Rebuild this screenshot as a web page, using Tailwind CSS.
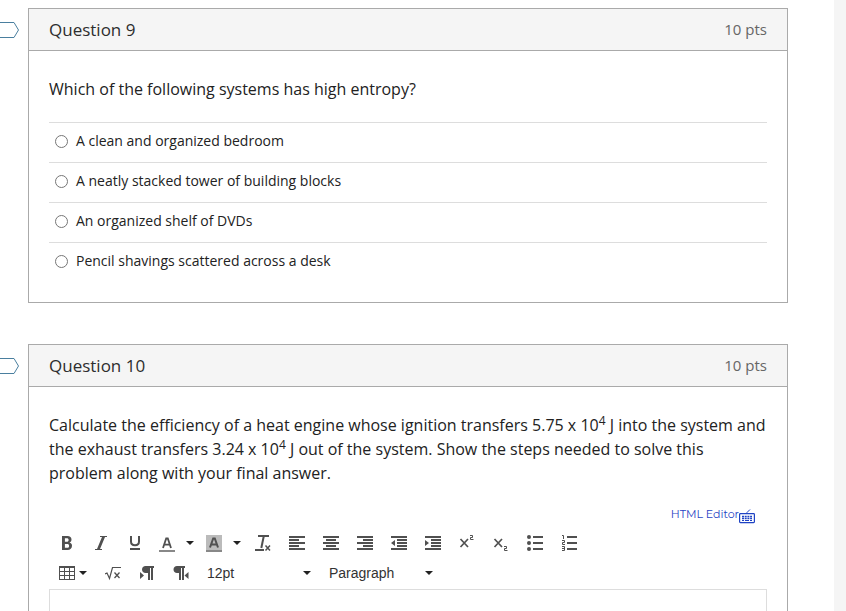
<!DOCTYPE html>
<html lang="en">
<head>
<meta charset="utf-8">
<meta name="viewport" content="width=device-width, initial-scale=1">
<title>Quiz</title>
<script src="https://cdn.jsdelivr.net/npm/@tailwindcss/browser@4"></script>
</head>
<body class="h-screen overflow-hidden bg-[#f5f5f5] pr-3 font-['Open_Sans',sans-serif] text-base text-[#222]">
<main class="flex min-h-full flex-col gap-[41px] bg-white pt-2 pr-[46px]">

  <section class="flex" aria-labelledby="q9">
    <button type="button" aria-label="Flag question 9" class="mt-[13px] h-[17px] w-7 shrink-0">
      <svg width="20" height="17" viewBox="0 0 20 17" fill="none" stroke="#4a7f9f"><path d="M-2 1.500H14L18.500 9L14 16.500H-2"/></svg>
    </button>
    <div class="min-w-0 grow border border-[#aaa]">
      <header class="flex h-[42px] items-center justify-between border-b border-[#aaa] bg-[#f5f5f5] px-5">
        <h2 id="q9" class="text-[17px] leading-6 text-[#2d2d2d]">Question 9</h2>
        <span class="pb-0.5 text-[15px] leading-6 text-[#666]">10 pts</span>
      </header>
      <div class="px-5 pt-[26px] pb-5">
        <p class="leading-6">Which of the following systems has high entropy?</p>
        <fieldset aria-label="Answers" class="mt-[21px] text-sm">
          <label class="flex h-10 items-center border-t border-[#ddd] pb-1 pl-1.5"><input type="radio" name="q9" class="mt-px mr-2 size-[13px]">A clean and organized bedroom</label>
          <label class="flex h-10 items-center border-t border-[#ddd] pb-1 pl-1.5"><input type="radio" name="q9" class="mt-px mr-2 size-[13px]">A neatly stacked tower of building blocks</label>
          <label class="flex h-10 items-center border-t border-[#ddd] pb-1 pl-1.5"><input type="radio" name="q9" class="mt-px mr-2 size-[13px]">An organized shelf of DVDs</label>
          <label class="flex h-10 items-center border-t border-[#ddd] pb-1 pl-1.5"><input type="radio" name="q9" class="mt-px mr-2 size-[13px]">Pencil shavings scattered across a desk</label>
        </fieldset>
      </div>
    </div>
  </section>

  <section class="flex" aria-labelledby="q10">
    <button type="button" aria-label="Flag question 10" class="mt-[13px] h-[17px] w-7 shrink-0">
      <svg width="20" height="17" viewBox="0 0 20 17" fill="none" stroke="#4a7f9f"><path d="M-2 1.500H14L18.500 9L14 16.500H-2"/></svg>
    </button>
    <div class="min-w-0 grow border border-[#aaa]">
      <header class="flex h-[42px] items-center justify-between border-b border-[#aaa] bg-[#f5f5f5] px-5">
        <h2 id="q10" class="text-[17px] leading-6 text-[#2d2d2d]">Question 10</h2>
        <span class="pb-0.5 text-[15px] leading-6 text-[#666]">10 pts</span>
      </header>
      <div class="px-5 pt-[26px] pb-5">
        <p class="leading-6">Calculate the efficiency of a heat engine whose ignition transfers 5.75 x 10<sup class="text-xs">4</sup> J into the system and the exhaust transfers 3.24 x 10<sup class="text-xs">4</sup> J out of the system. Show the steps needed to solve this problem along with your final answer.</p>
        <div class="mt-5 flex h-5 justify-end pr-3 text-[#1f43c4]">
          <a href="#" class="font-[Montserrat,Inter,sans-serif] text-[11px] leading-[18px]">HTML Editor</a>
          <button type="button" aria-label="Keyboard shortcuts" class="mt-1 h-[15px] w-4">
            <svg width="16" height="15" viewBox="0 0 16 15" fill="none" stroke="currentColor"><rect x=".6" y="4.600" width="14.800" height="9" rx=".8" stroke-width="1.200"/><path d="M8 4.500V3.500L11 .5"/><path d="M3 7.500h10M3 9.500h10" stroke-width="1.500" stroke-dasharray="2 .7"/><path d="M3 11.500h2M6 11.500h4M11 11.500h2" stroke-width="1.200"/></svg>
          </button>
        </div>
        <div role="toolbar" aria-label="Formatting" class="mt-[3px] px-px text-[#505050]">
          <div class="flex h-[30px] items-center">
            <button type="button" aria-label="Bold" class="flex w-[34px] justify-center"><svg width="16" height="16" fill="currentColor"><path fill-rule="evenodd" d="M3 1h5.500c2.500 0 4 1.300 4 3.500 0 1.500-.7 2.500-2 3 1.600.4 2.500 1.600 2.500 3.300C13 13.500 11.300 15 8.500 15H3zM5.900 3.200v3.600h1.900c1.200 0 1.800-.6 1.800-1.800S9 3.200 7.800 3.200zM5.900 9v3.800h2.200c1.300 0 2-.6 2-1.900S9.400 9 8.100 9z"/></svg></button>
            <button type="button" aria-label="Italic" class="flex w-[34px] justify-center"><svg width="16" height="16" fill="currentColor"><path d="M14 1v1h-2L7 14h2v1H2v-1h2L9 2H7V1z"/></svg></button>
            <button type="button" aria-label="Underline" class="flex w-[34px] justify-center"><svg width="16" height="16" fill="none" stroke="currentColor" stroke-width="2"><path d="M4 1v5.500C4 9 5.500 10.200 8 10.200S12 9 12 6.500V1M3 14h10"/></svg></button>
            <button type="button" aria-label="Text color" class="flex w-[47px] items-center gap-[11px] pl-[7px]"><svg width="16" height="18" viewBox="0 -1 16 18"><path d="M4 13l3.200-9.500h1.600L12 13M5.200 9.700h5.600" fill="none" stroke="currentColor" stroke-width="1.800"/><path d="M0 15h16v2H0z" fill="#888"/></svg><svg width="8" height="4" fill="#222"><path d="M0 0h8L4 4z"/></svg></button>
            <button type="button" aria-label="Background color" class="flex w-[47px] items-center gap-[11px] pl-[7px]"><svg width="16" height="18" viewBox="0 -1 16 18"><path d="M0 0h16v15H0z" fill="#bbb"/><path d="M4 12.500l3.200-9h1.600l3.200 9M5.200 9.500h5.600" fill="none" stroke="currentColor" stroke-width="2"/><path d="M0 15h16v2H0z" fill="#888"/></svg><svg width="8" height="4" fill="#222"><path d="M0 0h8L4 4z"/></svg></button>
            <button type="button" aria-label="Clear formatting" class="flex w-[34px] justify-center"><svg width="16" height="16" fill="none" stroke="currentColor"><path d="M3 1h11M0 15h9" stroke-width="2"/><path d="M8.800 1L6.300 13" stroke-width="2"/><path d="M10.500 10.500l4.500 5M15 10.500l-4.500 5" stroke-width="1.500"/></svg></button>
            <button type="button" aria-label="Align left" class="flex w-[34px] justify-center"><svg width="16" height="16" fill="currentColor"><path d="M0 1h16v2H0zM0 4h10v2H0zM0 7h16v2H0zM0 10h10v2H0zM0 13h16v2H0z"/></svg></button>
            <button type="button" aria-label="Align center" class="flex w-[34px] justify-center"><svg width="16" height="16" fill="currentColor"><path d="M0 1h16v2H0zM3 4h10v2H3zM0 7h16v2H0zM3 10h10v2H3zM0 13h16v2H0z"/></svg></button>
            <button type="button" aria-label="Align right" class="flex w-[34px] justify-center"><svg width="16" height="16" fill="currentColor"><path d="M0 1h16v2H0zM6 4h10v2H6zM0 7h16v2H0zM6 10h10v2H6zM0 13h16v2H0z"/></svg></button>
            <button type="button" aria-label="Outdent" class="flex w-[34px] justify-center"><svg width="16" height="16" fill="currentColor"><path d="M0 1h16v2H0zM6 4h10v2H6zM6 7h10v2H6zM6 10h10v2H6zM0 13h16v2H0zM4 5v6L0 8z"/></svg></button>
            <button type="button" aria-label="Indent" class="flex w-[34px] justify-center"><svg width="16" height="16" fill="currentColor"><path d="M0 1h16v2H0zM6 4h10v2H6zM6 7h10v2H6zM6 10h10v2H6zM0 13h16v2H0zM0 5v6l4-3z"/></svg></button>
            <button type="button" aria-label="Superscript" class="flex w-[34px] justify-center"><svg width="16" height="16" fill="none" stroke="currentColor"><path d="M1.500 4l7.500 8M9 4l-7.500 8" stroke-width="1.700"/><path d="M11 .5h2.500v2h-2v2h3"/></svg></button>
            <button type="button" aria-label="Subscript" class="flex w-[34px] justify-center"><svg width="16" height="16" fill="none" stroke="currentColor"><path d="M1.500 4l7.500 8M9 4l-7.500 8" stroke-width="1.700"/><path d="M11 11.500h2.500v2h-2v2h3"/></svg></button>
            <button type="button" aria-label="Bullet list" class="flex w-[34px] justify-center"><svg width="16" height="16" fill="currentColor"><path d="M6 1h10v2H6zM6 7h10v2H6zM6 13h10v2H6z"/><circle cx="2" cy="2" r="2"/><circle cx="2" cy="8" r="2"/><circle cx="2" cy="14" r="2"/></svg></button>
            <button type="button" aria-label="Numbered list" class="flex w-[34px] justify-center"><svg width="16" height="16" fill="currentColor"><path d="M6 1h10v2H6zM6 7h10v2H6zM6 13h10v2H6z"/><path d="M1 .5h1.500V4M1 5.500h2.500v2h-2v2h2.500M1 11.500h2.500v4H1M1 13.500h2" fill="none" stroke="currentColor"/></svg></button>
          </div>
          <div class="flex h-[30px] items-center">
            <button type="button" aria-label="Table" class="flex w-[46px] items-center gap-1 pl-[9px]"><svg width="16" height="16" fill="currentColor"><path fill-rule="evenodd" d="M0 1h16v14H0zM1 3v3h4V3zM6 3v3h4V3zM11 3v3h4V3zM1 7v3h4V7zM6 7v3h4V7zM11 7v3h4V7zM1 11v3h4v-3zM6 11v3h4v-3zM11 11v3h4v-3z"/></svg><svg width="8" height="4" fill="#222"><path d="M0 0h8L4 4z"/></svg></button>
            <button type="button" aria-label="Insert math equation" class="flex w-[34px] justify-center"><svg width="16" height="16" fill="none" stroke="currentColor"><path d="M0 9l2-1 2.500 5.500L7.500 2.500H16" stroke-width="1.200"/><path d="M9.500 7.500l5 5.500M14.500 7.500l-5 5.500" stroke-width="1.300"/></svg></button>
            <button type="button" aria-label="Left to right" class="flex w-[34px] justify-center"><svg width="16" height="16" fill="currentColor"><path d="M6.500 1H15v2h-1v12h-2V3h-1v12H9V8H6.500C4.500 8 3 6.500 3 4.500S4.500 1 6.500 1zM1 7v7l4-3.500z"/></svg></button>
            <button type="button" aria-label="Right to left" class="flex w-[34px] justify-center"><svg width="16" height="16" fill="currentColor"><path d="M4 1h8v2h-1v12H9V3H8v12H6V8H4C2 8 .5 6.500.5 4.500S2 1 4 1zM15.500 7v7l-4-3.500z"/></svg></button>
            <div class="relative flex w-[122px]">
              <select aria-label="Font size" class="w-full appearance-none bg-transparent pl-[9px] font-['Liberation_Sans',sans-serif] text-sm leading-5 text-[#333]"><option>12pt</option></select>
              <svg class="pointer-events-none absolute inset-y-0 right-[9px] my-auto" width="8" height="4" fill="#222"><path d="M0 0h8L4 4z"/></svg>
            </div>
            <div class="relative flex w-[122px]">
              <select aria-label="Block format" class="w-full appearance-none bg-transparent pl-[9px] font-['Liberation_Sans',sans-serif] text-sm leading-5 text-[#333]"><option>Paragraph</option></select>
              <svg class="pointer-events-none absolute inset-y-0 right-[9px] my-auto" width="8" height="4" fill="#222"><path d="M0 0h8L4 4z"/></svg>
            </div>
          </div>
        </div>
        <textarea aria-label="Answer" class="mt-px block h-48 w-full resize-none border border-[#ddd] p-2 outline-none"></textarea>
      </div>
    </div>
  </section>
</main>
</body>
</html>
